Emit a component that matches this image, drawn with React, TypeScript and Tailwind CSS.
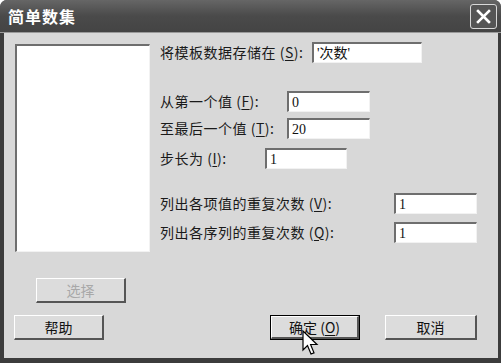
import React from "react";

const FONT = { fontFamily: '"Noto Sans CJK SC", "Liberation Sans", sans-serif' };

function Field({ value, width }: { value: string; width: number }) {
  return (
    <div
      className="h-[21px] bg-white border-t-2 border-l-2 border-t-[#6e6e6e] border-l-[#6e6e6e] border-b border-r border-b-[#f2f2f2] border-r-[#f2f2f2] flex items-center pl-[3px] text-[14px] text-[#111]"
      style={{ width, fontFamily: '"Liberation Serif", "Noto Sans CJK SC", serif' }}
    >
      {value}
    </div>
  );
}

function Row({
  label,
  hot,
  labelWidth,
  value,
  inputWidth,
  mt,
}: {
  label: string;
  hot: string;
  labelWidth: number;
  value: string;
  inputWidth: number;
  mt: string;
}) {
  return (
    <div className={`flex items-center ${mt}`}>
      <span className="text-[14px] tracking-[0.5px] text-[#1a1a1a] whitespace-nowrap" style={{ width: labelWidth }}>
        {label} (<span className="underline underline-offset-2">{hot}</span>):
      </span>
      <Field value={value} width={inputWidth} />
    </div>
  );
}

function Button({
  children,
  disabled,
  isDefault,
  className = "",
}: {
  children: React.ReactNode;
  disabled?: boolean;
  isDefault?: boolean;
  className?: string;
}) {
  return (
    <div
      className={`w-[90px] h-[25px] ${isDefault ? "border border-black" : ""} ${className}`}
    >
      <div className="w-full h-full bg-[#dcdcdc] border-t border-l border-t-white border-l-white border-b-2 border-r-2 border-b-[#555] border-r-[#555] flex items-center justify-center">
        <span className={`text-[14px] ${disabled ? "text-[#a8a8a8]" : "text-[#111]"}`}>{children}</span>
      </div>
    </div>
  );
}

export default function App() {
  return (
    <div className="w-[501px] h-[363px] bg-white" style={FONT}>
      <div className="relative w-[501px] h-[363px] flex flex-col bg-[#3c3c3c] rounded-t-[7px] overflow-hidden">
        {/* title bar */}
        <div className="h-[33px] shrink-0 flex items-center justify-between pl-[8px] pr-[4px] bg-gradient-to-b from-[#666] via-[#4a4a4a] to-[#444] border-b border-b-[#9a9a9a]">
          <span className="text-white text-[16px] font-bold tracking-[1px]">简单数集</span>
          <div className="w-[27px] h-[25px] rounded-[3px] border border-[#d8d8d8] bg-[#555] flex items-center justify-center">
            <svg width="15" height="15" viewBox="0 0 15 15">
              <path d="M2 2 L13 13 M13 2 L2 13" stroke="white" strokeWidth="2.6" strokeLinecap="square" />
            </svg>
          </div>
        </div>
        {/* body */}
        <div className="flex-1 ml-[4px] mr-[3px] mb-[5px] bg-[#d8d8d8] flex flex-col">
          <div className="flex">
            <div className="flex flex-col ml-[11px] w-[145px]">
              <div className="mt-[11px] w-[135px] h-[208px] bg-white border-t-2 border-l-2 border-t-[#6e6e6e] border-l-[#6e6e6e] border-b border-r border-b-[#f2f2f2] border-r-[#f2f2f2]" />
              <Button disabled className="mt-[26px] ml-[21px] h-[24px]">
                选择
              </Button>
            </div>
            <div className="flex flex-col">
              <Row label="将模板数据存储在" hot="S" labelWidth={152} value="'次数'" inputWidth={110} mt="mt-[9px]" />
              <Row label="从第一个值" hot="F" labelWidth={127} value="0" inputWidth={83} mt="mt-[28px]" />
              <Row label="至最后一个值" hot="T" labelWidth={127} value="20" inputWidth={83} mt="mt-[6px]" />
              <Row label="步长为" hot="I" labelWidth={105} value="1" inputWidth={82} mt="mt-[9px]" />
              <Row label="列出各项值的重复次数" hot="V" labelWidth={234} value="1" inputWidth={83} mt="mt-[24px]" />
              <Row label="列出各序列的重复次数" hot="Q" labelWidth={234} value="1" inputWidth={83} mt="mt-[8px]" />
            </div>
          </div>
          <div className="flex mt-[12px] pl-[10px]">
            <Button>帮助</Button>
            <Button isDefault className="ml-[166px]">
              确定 (<span className="underline underline-offset-2">O</span>)
            </Button>
            <Button className="ml-[25px] w-[92px]">取消</Button>
          </div>
        </div>
        {/* mouse cursor */}
        <svg className="absolute left-[302px] top-[330px]" width="18" height="27" viewBox="0 0 18 27">
          <path
            d="M1 1 L1 20 L5.5 15.5 L9 24 L12 22.8 L8.6 14.5 L15 14.5 Z"
            fill="white"
            stroke="black"
            strokeWidth="1.2"
            strokeLinejoin="miter"
          />
        </svg>
      </div>
    </div>
  );
}
